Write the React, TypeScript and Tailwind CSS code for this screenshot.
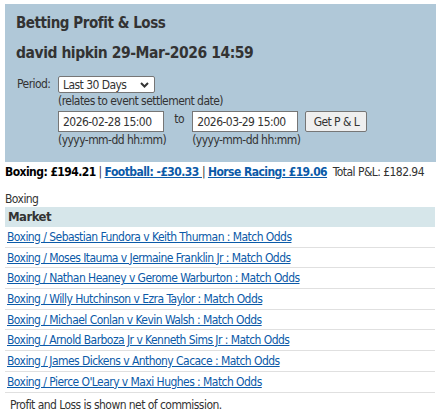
import React from "react";

const markets = [
  "Boxing / Sebastian Fundora v Keith Thurman : Match Odds",
  "Boxing / Moses Itauma v Jermaine Franklin Jr : Match Odds",
  "Boxing / Nathan Heaney v Gerome Warburton : Match Odds",
  "Boxing / Willy Hutchinson v Ezra Taylor : Match Odds",
  "Boxing / Michael Conlan v Kevin Walsh : Match Odds",
  "Boxing / Arnold Barboza Jr v Kenneth Sims Jr : Match Odds",
  "Boxing / James Dickens v Anthony Cacace : Match Odds",
  "Boxing / Pierce O'Leary v Maxi Hughes : Match Odds",
];

export default function App() {
  return (
    <div
      className="w-[441px] h-[413px] bg-white text-[#333] text-[12px] tracking-[-0.55px] overflow-hidden"
      style={{ fontFamily: '"DejaVu Sans Condensed", "DejaVu Sans", sans-serif' }}
    >
      <div className="pt-[4px] px-[5px]">
        <div className="bg-[#b0c8d8] h-[158px] pl-[11px] pt-[8px]">
          <div className="text-[15px] font-bold leading-[22px] tracking-[-0.45px] text-[#333]">Betting Profit &amp; Loss</div>
          <div className="text-[15.5px] font-bold leading-[22px] tracking-[-0.45px] mt-[8px] text-[#333]">david hipkin 29-Mar-2026 14:59</div>
          <div className="flex mt-[12px]">
            <div className="w-[42px] pl-[1px] pt-[1px] leading-[14px]">Period:</div>
            <div className="flex flex-col">
              <div className="w-[97px] h-[17px] bg-white border border-[#767676] rounded-[2px] flex items-center justify-between pl-[4px] pr-[5px] leading-none">
                <span>Last 30 Days</span>
                <svg width="9" height="6" viewBox="0 0 9 6"><path d="M1 1 L4.5 4.5 L8 1" stroke="#333" strokeWidth="2" fill="none" /></svg>
              </div>
              <div className="leading-[14px] mt-[1px]">(relates to event settlement date)</div>
              <div className="flex items-start mt-[3px]">
                <div className="flex flex-col">
                  <div className="w-[106px] h-[21px] bg-white border border-[#767676] flex items-center pl-[4px]">2026-02-28 15:00</div>
                  <div className="leading-[14px] mt-[1px]">(yyyy-mm-dd hh:mm)</div>
                </div>
                <div className="w-[26px] text-center leading-[14px] pt-[1px]">to</div>
                <div className="flex flex-col">
                  <div className="w-[106px] h-[21px] bg-white border border-[#767676] flex items-center pl-[4px]">2026-03-29 15:00</div>
                  <div className="leading-[14px] mt-[1px]">(yyyy-mm-dd hh:mm)</div>
                </div>
                <div className="ml-[5px] w-[62px] h-[21px] bg-[#efefef] border border-[#767676] rounded-[2px] flex items-center justify-center">Get P &amp; L</div>
              </div>
            </div>
          </div>
        </div>
        <div className="mt-[2px] leading-[16px] whitespace-nowrap">
          <span className="font-bold text-black">Boxing: £194.21</span>
          <span> | </span>
          <a className="font-bold text-[#0b5aa8] underline">Football: -£30.33 </a>
          <span> | </span>
          <a className="font-bold text-[#0b5aa8] underline">Horse Racing: £19.06</a>
          <span>&nbsp; Total P&amp;L: £182.94</span>
        </div>
        <div className="mt-[12px] leading-[15px]">Boxing</div>
        <div className="w-[430px]">
          <div className="bg-[#d6e6ea] h-[20px] flex items-center pl-[3px] font-bold text-[13px]">Market</div>
          {markets.map((m) => (
            <div key={m} className="h-[20.7px] border-b border-[#e0e0e0] flex items-center pl-[2px]">
              <a className="text-[#0b5aa8] underline">{m}</a>
            </div>
          ))}
        </div>
        <div className="pl-[5px] mt-[5px] leading-[14px]">Profit and Loss is shown net of commission.</div>
      </div>
    </div>
  );
}
